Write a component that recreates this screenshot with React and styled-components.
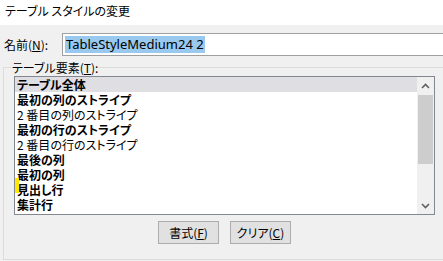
import React from 'react'
import styled, { createGlobalStyle } from 'styled-components'

const GlobalStyle = createGlobalStyle`
  body {
    margin: 0;
    background: #f0f0f0;
    font-family: "Noto Sans CJK JP", "Noto Sans", sans-serif;
    font-size: 12px;
    color: #000;
  }
`

const elements = [
  { name: 'テーブル全体', bold: true, selected: true },
  { name: '最初の列のストライプ', bold: true },
  { name: '2 番目の列のストライプ', bold: false },
  { name: '最初の行のストライプ', bold: true },
  { name: '2 番目の行のストライプ', bold: false },
  { name: '最後の列', bold: true },
  { name: '最初の列', bold: true },
  { name: '見出し行', bold: true },
  { name: '集計行', bold: true },
]

const Chevron = ({ up }) => (
  <svg width="9" height="6" viewBox="0 0 9 6">
    <path
      d={up ? 'M1 5 L4.5 1.5 L8 5' : 'M1 1 L4.5 4.5 L8 1'}
      fill="none"
      stroke="#606060"
      strokeWidth="1.6"
    />
  </svg>
)

const App = () => (
  <Window>
    <GlobalStyle />
    <TitleBar>テーブル スタイルの変更</TitleBar>
    <Body>
      <NameRow>
        <Label>名前(<u>N</u>):</Label>
        <NameInput>
          <Selection>TableStyleMedium24 2</Selection>
        </NameInput>
      </NameRow>
      <GroupBox>
        <Legend>テーブル要素(<u>T</u>):</Legend>
        <ListBox>
          <Rows>
            {elements.map(({ name, bold, selected }) => (
              <Row key={name} $bold={bold} $selected={selected}>{name}</Row>
            ))}
            <Marker />
          </Rows>
          <ScrollBar>
            <Arrow><Chevron up /></Arrow>
            <Track>
              <Thumb />
            </Track>
            <Arrow><Chevron /></Arrow>
          </ScrollBar>
        </ListBox>
        <ButtonRow>
          <Button>書式(<u>F</u>)</Button>
          <Button>クリア(<u>C</u>)</Button>
        </ButtonRow>
      </GroupBox>
    </Body>
  </Window>
)

const Window = styled.div`
  width: 443px;
  height: 261px;
  overflow: hidden;
  font-feature-settings: "palt";
`

const TitleBar = styled.div`
  height: 25px;
  box-sizing: border-box;
  background: #fff;
  padding: 3px 0 0 5px;
  line-height: 16px;
`

const Body = styled.div`
  background: #f0f0f0;
  height: 236px;
  padding-top: 8px;
  box-sizing: border-box;
`

const NameRow = styled.div`
  display: flex;
  align-items: center;
  height: 23px;
`

const Label = styled.span`
  width: 58px;
  padding-left: 4px;
  white-space: nowrap;
`

const NameInput = styled.div`
  flex: 1;
  height: 23px;
  box-sizing: border-box;
  margin-right: -6px;
  border: 1px solid #a0a0a0;
  background: #fff;
  display: flex;
  align-items: center;
  padding-left: 2px;
`

const Selection = styled.span`
  font-family: "Noto Sans", "Open Sans", sans-serif;
  font-size: 13px;
  line-height: 17px;
  background: #99c9ef;
  padding: 0 1px;
  color: #000;
`

const GroupBox = styled.div`
  margin: 11px -6px 0 3px;
  height: 193px;
  box-sizing: border-box;
  border: 1px solid #dcdcdc;
  display: flex;
  flex-direction: column;
`

const Legend = styled.div`
  align-self: flex-start;
  margin: -8px 0 0 7px;
  padding: 0 1px;
  line-height: 15px;
  background: #f0f0f0;
`

const ListBox = styled.div`
  margin: 1px 0 0 10px;
  width: 421px;
  height: 139px;
  box-sizing: border-box;
  border: 1px solid #828790;
  background: #fff;
  display: flex;
`

const Rows = styled.div`
  flex: 1;
  position: relative;
`

const Row = styled.div`
  height: 15px;
  line-height: 15px;
  padding-left: 2px;
  font-weight: ${p => (p.$bold ? 700 : 400)};
  background: ${p => (p.$selected ? '#dedee3' : 'transparent')};
  white-space: nowrap;
  overflow: hidden;
`

const Marker = styled.div`
  position: absolute;
  left: 0;
  top: 101px;
  width: 4px;
  height: 15px;
  background: #ffe800;
`

const ScrollBar = styled.div`
  width: 17px;
  display: flex;
  flex-direction: column;
  background: #f0f0f0;
`

const Arrow = styled.div`
  height: 17px;
  display: flex;
  align-items: center;
  justify-content: center;
`

const Track = styled.div`
  flex: 1;
  padding: 1px 1px 0;
`

const Thumb = styled.div`
  height: 69px;
  background: #cdcdcd;
`

const ButtonRow = styled.div`
  display: flex;
  justify-content: center;
  gap: 11px;
  margin-top: 6px;
  padding-right: 3px;
`

const Button = styled.div`
  width: 61px;
  height: 23px;
  box-sizing: border-box;
  border: 1px solid #adadad;
  background: #e1e1e1;
  display: flex;
  align-items: center;
  justify-content: center;
  line-height: 15px;
`

export default App
